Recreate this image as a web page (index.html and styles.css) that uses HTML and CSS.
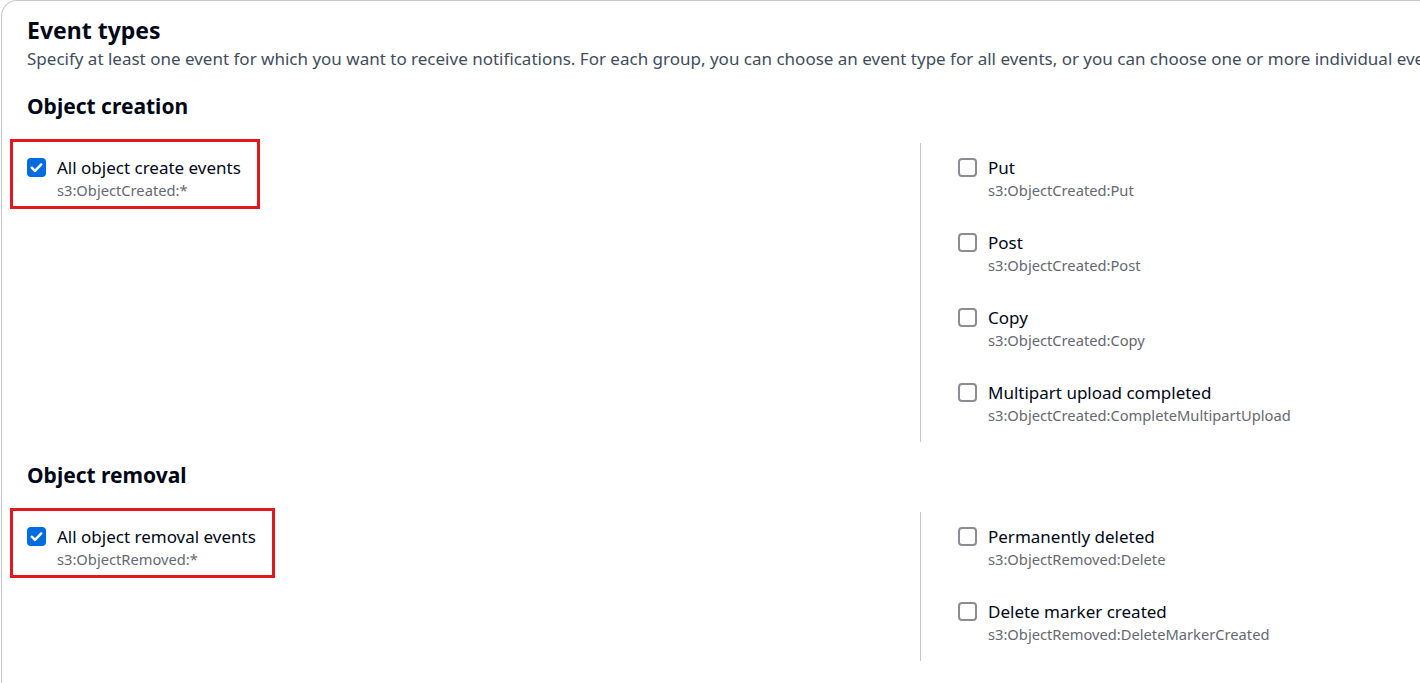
FILE: index.html
```html
<!DOCTYPE html>
<html lang="en">
<head>
<meta charset="utf-8">
<title>Event types</title>
<link rel="stylesheet" href="styles.css">
</head>
<body>
<div class="card">
  <h2 class="title">Event types</h2>
  <p class="desc">Specify at least one event for which you want to receive notifications. For each group, you can choose an event type for all events, or you can choose one or more individual events.</p>

  <section class="group">
    <h3 class="group-title">Object creation</h3>
    <div class="cols">
      <div class="col col-left">
        <label class="item highlight">
          <span class="box checked"><svg viewBox="0 0 20 20" width="19" height="19"><path d="M5 10.2l3.4 3.4L15 6.8" fill="none" stroke="#fff" stroke-width="2.6" stroke-linecap="round" stroke-linejoin="round"/></svg></span>
          <span class="text"><span class="label">All object create events</span><span class="sub">s3:ObjectCreated:*</span></span>
        </label>
      </div>
      <div class="col col-right">
        <label class="item"><span class="box"></span><span class="text"><span class="label">Put</span><span class="sub">s3:ObjectCreated:Put</span></span></label>
        <label class="item"><span class="box"></span><span class="text"><span class="label">Post</span><span class="sub">s3:ObjectCreated:Post</span></span></label>
        <label class="item"><span class="box"></span><span class="text"><span class="label">Copy</span><span class="sub">s3:ObjectCreated:Copy</span></span></label>
        <label class="item"><span class="box"></span><span class="text"><span class="label">Multipart upload completed</span><span class="sub">s3:ObjectCreated:CompleteMultipartUpload</span></span></label>
      </div>
    </div>
  </section>

  <section class="group">
    <h3 class="group-title">Object removal</h3>
    <div class="cols">
      <div class="col col-left">
        <label class="item highlight">
          <span class="box checked"><svg viewBox="0 0 20 20" width="19" height="19"><path d="M5 10.2l3.4 3.4L15 6.8" fill="none" stroke="#fff" stroke-width="2.6" stroke-linecap="round" stroke-linejoin="round"/></svg></span>
          <span class="text"><span class="label">All object removal events</span><span class="sub">s3:ObjectRemoved:*</span></span>
        </label>
      </div>
      <div class="col col-right">
        <label class="item"><span class="box"></span><span class="text"><span class="label">Permanently deleted</span><span class="sub">s3:ObjectRemoved:Delete</span></span></label>
        <label class="item"><span class="box"></span><span class="text"><span class="label">Delete marker created</span><span class="sub">s3:ObjectRemoved:DeleteMarkerCreated</span></span></label>
      </div>
    </div>
  </section>
</div>
</body>
</html>
```
FILE: styles.css
```css
html, body {
  margin: 0;
  padding: 0;
  background: #ffffff;
  overflow: hidden;
}
body {
  font-family: "Noto Sans", "Open Sans", sans-serif;
  color: #000716;
  width: 1420px;
  height: 683px;
}
.card {
  margin-left: 1px;
  width: 1700px;
  min-height: 700px;
  border: 1px solid #c6c6cd;
  border-right: none;
  border-bottom: none;
  border-top-left-radius: 16px;
  padding: 14px 0 0 25px;
  box-sizing: border-box;
}
.title {
  margin: 0;
  font-size: 23px;
  line-height: 30px;
  font-weight: 700;
  color: #000716;
}
.desc {
  margin: 3px 0 0 0;
  font-size: 17px;
  line-height: 22px;
  color: #414d5c;
  white-space: nowrap;
}
.group {
  margin-top: 21px;
}
.group + .group {
  margin-top: 18px;
}
.group-title {
  margin: 0;
  padding-top: 1px;
  font-size: 21px;
  line-height: 28px;
  font-weight: 700;
  color: #000716;
}
.cols {
  display: grid;
  grid-template-columns: 893px 1fr;
  margin-top: 23px;
}
.col {
  display: flex;
  flex-direction: column;
  align-items: flex-start;
  gap: 32px;
  padding: 14px 0 17px 0;
}
.col-right {
  border-left: 1px solid #c6c6cd;
  padding-left: 37px;
}
.item {
  display: inline-flex;
  align-items: flex-start;
  gap: 11px;
  cursor: pointer;
}
.box {
  flex: none;
  width: 19px;
  height: 19px;
  margin-top: 1px;
  box-sizing: border-box;
  border: 2px solid #8c8c94;
  border-radius: 4px;
  background: #fff;
  display: flex;
  align-items: center;
  justify-content: center;
}
.box.checked {
  border: none;
  background: #006ce0;
}
.box svg {
  display: block;
}
.text {
  display: flex;
  flex-direction: column;
}
.label {
  font-size: 17px;
  line-height: 22px;
  color: #000716;
}
.sub {
  padding-top: 1px;
  font-size: 14.7px;
  line-height: 20px;
  color: #656871;
}
.highlight {
  border: 3px solid #e0191f;
  padding: 15px 16px 6px 14px;
  margin: -18px -19px -9px -17px;
}
```
